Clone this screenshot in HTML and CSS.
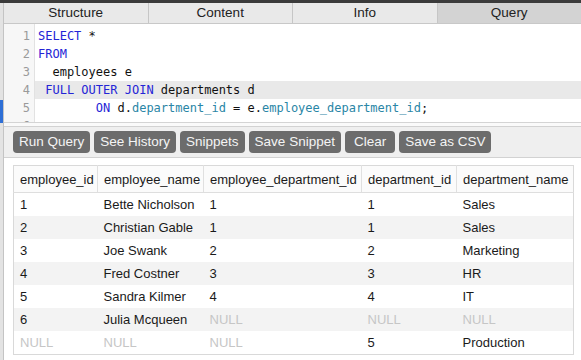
FILE: index.html
```html
<!DOCTYPE html>
<html>
<head>
<meta charset="utf-8">
<link rel="stylesheet" href="styles.css">
</head>
<body>
<div class="app">
  <div class="topbar"></div>
  <div class="frame">
    <div class="rail"><div class="rail-space"></div><div class="rail-mark"></div></div>
    <div class="main">
      <div class="tabs">
        <div class="tab">Structure</div>
        <div class="tab">Content</div>
        <div class="tab">Info</div>
        <div class="tab active">Query</div>
      </div>
      <div class="editor">
        <div class="gutter">
          <div class="ln">1</div><div class="ln">2</div><div class="ln">3</div><div class="ln">4</div><div class="ln">5</div><div class="ln">6</div>
        </div>
        <div class="code">
          <div class="line"><span class="kw">SELECT</span> *</div>
          <div class="line"><span class="kw">FROM</span></div>
          <div class="line">  employees e</div>
          <div class="line current"> <span class="kw">FULL OUTER JOIN</span> departments d</div>
          <div class="line">        <span class="kw">ON</span> d.<span class="id">department_id</span> = e.<span class="id">employee_department_id</span>;</div>
          <div class="line"> </div>
        </div>
      </div>
      <div class="handle"></div>
      <div class="toolbar">
        <button class="btn">Run Query</button>
        <button class="btn">See History</button>
        <button class="btn">Snippets</button>
        <button class="btn">Save Snippet</button>
        <button class="btn wide">Clear</button>
        <button class="btn">Save as CSV</button>
      </div>
      <div class="results">
        <table class="grid">
          <thead>
            <tr><th class="c1">employee_id</th><th class="c2">employee_name</th><th class="c3">employee_department_id</th><th class="c4">department_id</th><th class="c5">department_name</th></tr>
          </thead>
          <tbody>
            <tr><td>1</td><td>Bette Nicholson</td><td>1</td><td>1</td><td>Sales</td></tr>
            <tr><td>2</td><td>Christian Gable</td><td>1</td><td>1</td><td>Sales</td></tr>
            <tr><td>3</td><td>Joe Swank</td><td>2</td><td>2</td><td>Marketing</td></tr>
            <tr><td>4</td><td>Fred Costner</td><td>3</td><td>3</td><td>HR</td></tr>
            <tr><td>5</td><td>Sandra Kilmer</td><td>4</td><td>4</td><td>IT</td></tr>
            <tr><td>6</td><td>Julia Mcqueen</td><td class="null">NULL</td><td class="null">NULL</td><td class="null">NULL</td></tr>
            <tr><td class="null">NULL</td><td class="null">NULL</td><td class="null">NULL</td><td>5</td><td>Production</td></tr>
          </tbody>
        </table>
      </div>
    </div>
  </div>
</div>
</body>
</html>
```
FILE: styles.css
```css
html, body {
  margin: 0;
  padding: 0;
  background: #ffffff;
}
body {
  width: 581px;
  height: 360px;
  overflow: hidden;
  font-family: "Liberation Sans", Arial, sans-serif;
  font-size: 13px;
  color: #1a1a1a;
}
.app {
  display: flex;
  flex-direction: column;
  height: 360px;
}
.topbar {
  height: 3px;
  background: #3b3b3b;
  flex: none;
}
.frame {
  flex: 1;
  display: flex;
  min-height: 0;
}
.rail {
  width: 3px;
  flex: none;
  background: #e3e3e3;
  border-right: 1px solid #c4c4c4;
  display: flex;
  flex-direction: column;
}
.rail-space {
  height: 97px;
}
.rail-mark {
  height: 23px;
  background: #2f6fd6;
}
.main {
  flex: 1;
  display: flex;
  flex-direction: column;
  min-width: 0;
}
.tabs {
  display: flex;
  height: 20px;
  background: #e9e9e9;
  border-bottom: 1px solid #c8c8c8;
  flex: none;
}
.tab {
  flex: 1;
  text-align: center;
  line-height: 20px;
  font-size: 13.5px;
  color: #222;
  border-left: 1px solid #c6c6c6;
}
.tab:first-child {
  border-left: none;
}
.tab.active {
  background: #d3d3d3;
}
.editor {
  height: 98px;
  display: flex;
  overflow: hidden;
  border-bottom: 1px solid #d4d4d4;
  flex: none;
  font-family: "DejaVu Sans Mono", "Liberation Mono", monospace;
  font-size: 12px;
}
.gutter {
  flex: none;
  background: #f7f7f7;
  border-right: 1px solid #e2e2e2;
  padding-top: 3px;
  box-sizing: border-box;
  width: 31px;
}
.ln {
  height: 18px;
  line-height: 18px;
  text-align: right;
  padding-right: 4px;
  color: #9a9a9a;
}
.code {
  flex: 1;
  padding-top: 3px;
}
.line {
  height: 18px;
  line-height: 18px;
  white-space: pre;
  padding-left: 3px;
  color: #111;
}
.line.current {
  background: #e9e9e9;
}
.kw {
  color: #2424d6;
}
.id {
  color: #2a86a6;
}
.handle {
  height: 3px;
  background: #fafafa;
  flex: none;
}
.toolbar {
  flex: none;
  display: flex;
  gap: 4px;
  padding: 4px 9px 4px;
  background: #efefef;
  border-top: 1px solid #d2d2d2;
  border-bottom: 1px solid #d2d2d2;
}
.btn {
  height: 22px;
  padding: 0 6px;
  border: none;
  border-radius: 4px;
  background: #6c6c6c;
  color: #f4f4f4;
  font-family: "Liberation Sans", Arial, sans-serif;
  font-size: 13.5px;
  line-height: 22px;
}
.btn.wide {
  padding: 0 9px;
}
.results {
  padding: 7px 8px 0 9px;
}
.grid {
  width: 560px;
  border-collapse: collapse;
  table-layout: fixed;
  border: 1px solid #d9d9d9;
  font-size: 13px;
}
.grid th {
  box-sizing: border-box;
  height: 27px;
  padding: 0 5px 0 6px;
  text-align: left;
  font-weight: normal;
  background: #fbfbfb;
  border-right: 1px solid #e0e0e0;
  border-bottom: 1px solid #dedede;
  color: #1a1a1a;
  white-space: nowrap;
  overflow: hidden;
}
.grid th:last-child {
  border-right: none;
}
.grid td {
  height: 23px;
  padding: 0 5px 0 6px;
  color: #1a1a1a;
  white-space: nowrap;
  overflow: hidden;
}
.grid tbody tr:nth-child(even) td {
  background: #f3f3f3;
}
.grid td.null {
  color: #c6c6c6;
}
.c1 { width: 84px; }
.c2 { width: 106px; }
.c3 { width: 158px; }
.c4 { width: 95px; }
.c5 { width: 117px; }
```
